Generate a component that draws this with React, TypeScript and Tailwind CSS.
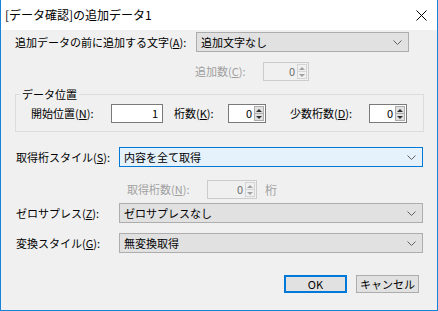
import React from "react";

const FONT = { fontFamily: '"Meiryo UI", "Noto Sans CJK JP", "Noto Sans", sans-serif' };

function U({ c }: { c: string }) {
  return <span className="underline">{c}</span>;
}

function Chevron() {
  return (
    <svg width="9" height="5" viewBox="0 0 9 5" className="shrink-0">
      <polyline points="0.5,0.5 4.5,4.5 8.5,0.5" fill="none" stroke="#606060" strokeWidth="1" />
    </svg>
  );
}

function Combo({ text, width, focused }: { text: string; width: string; focused?: boolean }) {
  return (
    <div
      className={`${width} h-full flex items-center justify-between pl-[4px] pr-[6px] border ${
        focused ? "border-[#0078d7] bg-[#e5f1fb]" : "border-[#adadad] bg-[#e1e1e1]"
      }`}
    >
      <span className="text-[#000]">{text}</span>
      <Chevron />
    </div>
  );
}

function Arrows({ disabled }: { disabled?: boolean }) {
  const fill = disabled ? "#a0a0a0" : "#303030";
  return (
    <div className="h-full py-[1px] pr-[1px] flex flex-col">
      <div className={`w-[10px] flex-1 flex flex-col border ${disabled ? "border-[#d4d4d4] bg-[#f0f0f0]" : "border-[#adadad] bg-[#e1e1e1]"}`}>
        <div className="flex-1 flex items-center justify-center">
          <svg width="6" height="3" viewBox="0 0 6 3"><polygon points="0,3 3,0 6,3" fill={fill} /></svg>
        </div>
        <div className={`h-px ${disabled ? "bg-[#d4d4d4]" : "bg-[#adadad]"}`} />
        <div className="flex-1 flex items-center justify-center">
          <svg width="6" height="3" viewBox="0 0 6 3"><polygon points="0,0 6,0 3,3" fill={fill} /></svg>
        </div>
      </div>
    </div>
  );
}

function Spinner({ value, width, disabled }: { value: string; width: string; disabled?: boolean }) {
  return (
    <div
      className={`${width} h-full flex items-center border ${
        disabled ? "border-[#cccccc] bg-[#f0f0f0] text-[#6d6d6d]" : "border-[#7a7a7a] bg-white text-black"
      }`}
    >
      <span className="flex-1 text-right pr-[2px]">{value}</span>
      <Arrows disabled={disabled} />
    </div>
  );
}

export default function App() {
  return (
    <div
      className="w-[438px] h-[311px] flex flex-col border-l border-r border-b border-[#1883d7] text-[11px] leading-none text-black"
      style={FONT}
    >
      {/* Title bar */}
      <div className="h-[30px] shrink-0 bg-white flex items-center justify-between pl-[4px] pr-[10px]">
        <span className="text-[12px]">[データ確認]の追加データ1</span>
        <svg width="11" height="11" viewBox="0 0 11 11">
          <line x1="0.5" y1="0.5" x2="10.5" y2="10.5" stroke="#000" strokeWidth="1" />
          <line x1="10.5" y1="0.5" x2="0.5" y2="10.5" stroke="#000" strokeWidth="1" />
        </svg>
      </div>

      {/* Body */}
      <div className="flex-1 bg-[#f0f0f0] pl-[14px] flex flex-col whitespace-nowrap">
        <div className="mt-[2px] h-[20px] flex items-center">
          <span className="w-[181px]">追加データの前に追加する文字(<U c="A" />):</span>
          <Combo text="追加文字なし" width="w-[213px]" />
        </div>

        <div className="mt-[10px] h-[19px] flex items-center pl-[180px] text-[#a0a0a0]">
          <span className="w-[68px]">追加数(<U c="C" />):</span>
          <Spinner value="0" width="w-[46px]" disabled />
        </div>

        {/* Group box */}
        <div className="mt-[13px] w-[409px] border border-[#dcdcdc] flex flex-col pb-[8px]">
          <span className="-mt-[8px] ml-[4px] w-fit px-[2px] h-[14px] leading-[14px] bg-[#f0f0f0]">データ位置</span>
          <div className="mt-[3px] h-[19px] flex items-center pl-[15px]">
            <span className="w-[80px]">開始位置(<U c="N" />):</span>
            <div className="w-[52px] h-full border border-[#7a7a7a] bg-white flex items-center justify-end pr-[4px]">1</div>
            <span className="ml-[11px] w-[54px]">桁数(<U c="K" />):</span>
            <Spinner value="0" width="w-[38px]" />
            <span className="ml-[24px] w-[79px]">少数桁数(<U c="D" />):</span>
            <Spinner value="0" width="w-[38px]" />
          </div>
        </div>

        <div className="mt-[15px] h-[20px] flex items-center">
          <span className="w-[104px] pl-[1px]">取得桁スタイル(<U c="S" />):</span>
          <Combo text="内容を全て取得" width="w-[304px]" focused />
        </div>

        <div className="mt-[13px] h-[19px] flex items-center pl-[112px] text-[#a0a0a0]">
          <span className="w-[80px]">取得桁数(<U c="N" />):</span>
          <Spinner value="0" width="w-[50px]" disabled />
          <span className="ml-[8px] text-[12px]">桁</span>
        </div>

        <div className="mt-[4px] h-[20px] flex items-center">
          <span className="w-[104px] pl-[1px]">ゼロサプレス(<U c="Z" />):</span>
          <Combo text="ゼロサプレスなし" width="w-[304px]" />
        </div>

        <div className="mt-[10px] h-[20px] flex items-center">
          <span className="w-[104px] pl-[1px]">変換スタイル(<U c="G" />):</span>
          <Combo text="無変換取得" width="w-[304px]" />
        </div>

        <div className="mt-[22px] h-[18px] flex items-stretch pl-[269px] gap-[9px]">
          <button className="w-[63px] border-2 border-[#0078d7] bg-[#e1e1e1] flex items-center justify-center">OK</button>
          <button className="w-[63px] border border-[#adadad] bg-[#e1e1e1] flex items-center justify-center">キャンセル</button>
        </div>
      </div>
    </div>
  );
}
